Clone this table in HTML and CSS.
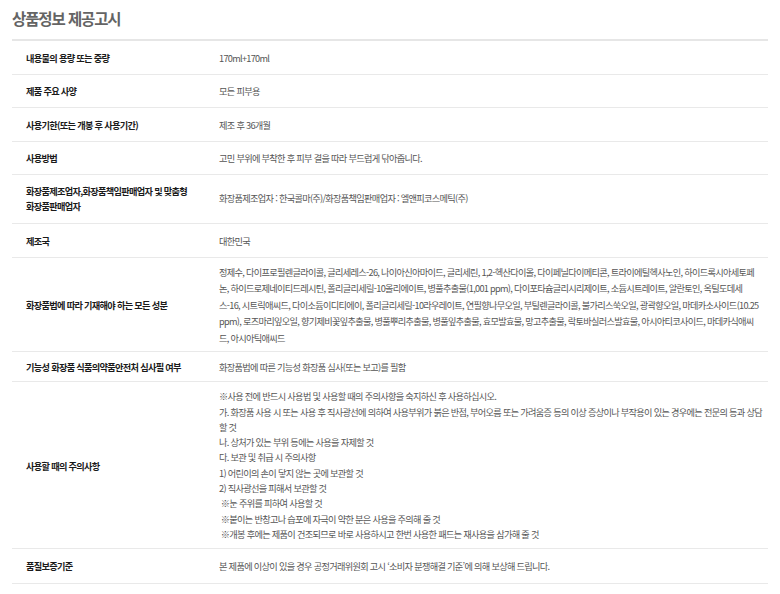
FILE: index.html
```html
<!DOCTYPE html>
<html lang="ko">
<head>
<meta charset="utf-8">
<title>상품정보 제공고시</title>
<link rel="stylesheet" href="styles.css">
</head>
<body>
<div class="notice">
  <h2 class="notice-title">상품정보 제공고시</h2>
  <table class="info-table">
    <tbody>
      <tr>
        <th>내용물의 용량 또는 중량</th>
        <td>170ml+170ml</td>
      </tr>
      <tr>
        <th>제품 주요 사양</th>
        <td>모든 피부용</td>
      </tr>
      <tr>
        <th>사용기한(또는 개봉 후 사용기간)</th>
        <td>제조 후 36개월</td>
      </tr>
      <tr>
        <th>사용방법</th>
        <td>고민 부위에 부착한 후 피부 결을 따라 부드럽게 닦아줍니다.</td>
      </tr>
      <tr class="two">
        <th>화장품제조업자,화장품책임판매업자 및 맞춤형 화장품판매업자</th>
        <td>화장품제조업자 : 한국콜마(주)/화장품책임판매업자 : 엘앤피코스메틱(주)</td>
      </tr>
      <tr>
        <th>제조국</th>
        <td>대한민국</td>
      </tr>
      <tr class="ingredients">
        <th>화장품법에 따라 기재해야 하는 모든 성분</th>
        <td>정제수, 다이프로필렌글라이콜, 글리세레스-26, 나이아신아마이드, 글리세린, 1,2-헥산다이올, 다이페닐다이메티콘, 트라이에틸헥사노인, 하이드록시아세토페논, 하이드로제네이티드레시틴, 폴리글리세릴-10올리에이트, 병풀추출물(1,001 ppm), 다이포타슘글리시리제이트, 소듐시트레이트, 알란토인, 옥틸도데세스-16, 시트릭애씨드, 다이소듐이디티에이, 폴리글리세릴-10라우레이트, 연필향나무오일, 부틸렌글라이콜, 불가리스쑥오일, 광곽향오일, 마데카소사이드(10.25 ppm), 로즈마리잎오일, 향기제비꽃잎추출물, 병풀뿌리추출물, 병풀잎추출물, 효모발효물, 망고추출물, 락토바실러스발효물, 아시아티코사이드, 마데카식애씨드, 아시아틱애씨드</td>
      </tr>
      <tr class="compact">
        <th>기능성 화장품 식품의약품안전처 심사필 여부</th>
        <td>화장품법에 따른 기능성 화장품 심사(또는 보고)를 필함</td>
      </tr>
      <tr class="caution">
        <th>사용할 때의 주의사항</th>
        <td>※사용 전에 반드시 사용법 및 사용할 때의 주의사항을 숙지하신 후 사용하십시오.<br>가. 화장품 사용 시 또는 사용 후 직사광선에 의하여 사용부위가 붉은 반점, 부어오름 또는 가려움증 등의 이상 증상이나 부작용이 있는 경우에는 전문의 등과 상담할 것<br>나. 상처가 있는 부위 등에는 사용을 자제할 것<br>다. 보관 및 취급 시 주의사항<br>1) 어린이의 손이 닿지 않는 곳에 보관할 것<br>2) 직사광선을 피해서 보관할 것<br>&nbsp;※눈 주위를 피하여 사용할 것<br>&nbsp;※붙이는 반창고나 습포에 자극이 약한 분은 사용을 주의해 줄 것<br>&nbsp;※개봉 후에는 제품이 건조되므로 바로 사용하시고 한번 사용한 패드는 재사용을 삼가해 줄 것</td>
      </tr>
      <tr class="last">
        <th>품질보증기준</th>
        <td>본 제품에 이상이 있을 경우 공정거래위원회 고시 ‘소비자 분쟁해결 기준’에 의해 보상해 드립니다.</td>
      </tr>
    </tbody>
  </table>
</div>
</body>
</html>
```
FILE: styles.css
```css
html, body {
  margin: 0;
  padding: 0;
  background: #ffffff;
}

body {
  font-family: "Noto Sans CJK KR", "Noto Sans", sans-serif;
}

.notice {
  padding: 6px 12px 0 12px;
}

.notice-title {
  margin: 0;
  font-size: 15.5px;
  line-height: 24px;
  font-weight: 700;
  color: #646464;
  letter-spacing: -1.1px;
  padding-bottom: 9px;
}

.info-table {
  width: 100%;
  table-layout: fixed;
  border-collapse: collapse;
  border-top: 2px solid #e6e6e6;
}

.info-table tr {
  border-bottom: 1px solid #e9e9e9;
}

.info-table th,
.info-table td {
  font-size: 9.2px;
  line-height: 16px;
  letter-spacing: -0.7px;
  padding-top: 8.5px;
  padding-bottom: 8px;
  vertical-align: middle;
  text-align: left;
}

.info-table th {
  width: 169px;
  padding-left: 14px;
  padding-right: 12px;
  font-weight: 700;
  color: #1a1a1a;
}

.info-table td {
  color: #555555;
  padding-left: 12px;
  padding-right: 6px;
}

.info-table tr.two th,
.info-table tr.two td {
  line-height: 15px;
  padding-top: 8.5px;
  padding-bottom: 9.5px;
}

.info-table tr.ingredients th,
.info-table tr.ingredients td {
  padding-top: 6px;
  padding-bottom: 5px;
}

.info-table tr.ingredients td {
  line-height: 16.5px;
}

.info-table tr.compact th,
.info-table tr.compact td {
  padding-top: 7px;
  padding-bottom: 6px;
}

.info-table tr.caution th,
.info-table tr.caution td {
  padding-top: 7.3px;
  padding-bottom: 6px;
}

.info-table tr.caution td {
  line-height: 15.3px;
}

.info-table tr.last th,
.info-table tr.last td {
  padding-top: 9px;
  padding-bottom: 9px;
}
```
